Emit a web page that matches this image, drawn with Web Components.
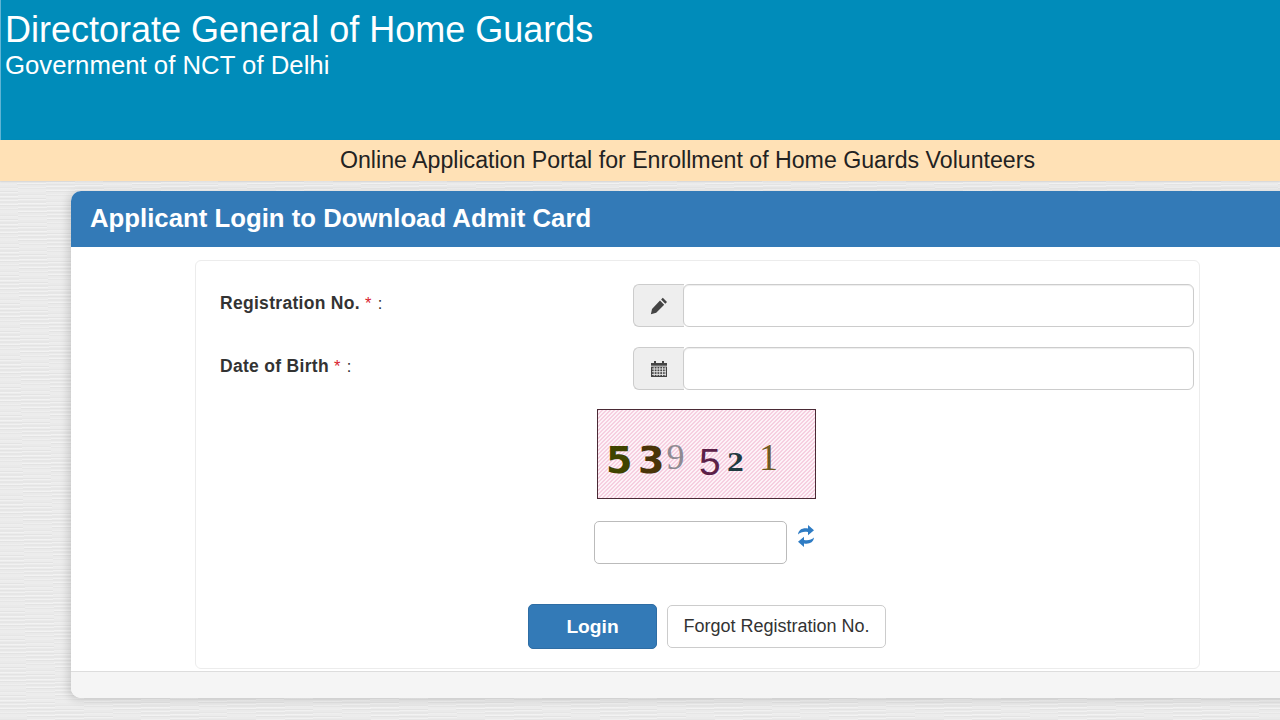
<!DOCTYPE html>
<html lang="en">
<head>
<meta charset="utf-8">
<title>Directorate General of Home Guards</title>
<style>
  html, body { margin: 0; height: 720px; overflow: hidden; }
  body {
    font-family: "Liberation Sans", Arial, sans-serif;
    background-color: #e9e9e9;
    background-image:
      repeating-linear-gradient(178deg, rgba(255,255,255,.35) 0 1px, transparent 1px 4px),
      repeating-linear-gradient(180deg, #ececec 0 2px, #e3e3e3 2px 3px, #eaeaea 3px 5px, #e6e6e6 5px 7px);
  }
</style>
</head>
<body>
<hg-header title="Directorate General of Home Guards" subtitle="Government of NCT of Delhi"></hg-header>
<hg-banner>Online Application Portal for Enrollment of Home Guards Volunteers</hg-banner>
<hg-panel heading="Applicant Login to Download Admit Card">
  <hg-field label="Registration No." icon="pencil"></hg-field>
  <hg-field label="Date of Birth" icon="calendar"></hg-field>
  <hg-captcha></hg-captcha>
  <hg-actions></hg-actions>
</hg-panel>

<script>
// cabecera azul
class HgHeader extends HTMLElement {
  connectedCallback() {
    this.attachShadow({ mode: "open" });
    this.shadowRoot.innerHTML = `
    <style>
      :host { display: block; height: 140px; box-sizing: border-box; background: #008cba; color: #fff; padding: 11px 0 0 5px; border-left: 1px solid #5fb4d4; }
      h1 { margin: 0; font-weight: 400; font-size: 36px; line-height: 38px; margin-left: -1px; }
      p { margin: 0; font-size: 25.75px; line-height: 32px; margin-left: -1px; }
    </style>
    <h1>${this.getAttribute("title")}</h1>
    <p>${this.getAttribute("subtitle")}</p>`;
  }
}

class HgBanner extends HTMLElement {
  connectedCallback() {
    this.attachShadow({ mode: "open" });
    this.shadowRoot.innerHTML = `
    <style>
      :host { display: flex; justify-content: center; align-items: center; height: 41px; background: #ffe1b6; color: #222; font-size: 23.17px; padding-left: 95px; box-sizing: border-box; box-shadow: 0 1px 2px rgba(0,0,0,.08); }
    </style>
    <slot></slot>`;
  }
}

class HgPanel extends HTMLElement {
  connectedCallback() {
    this.attachShadow({ mode: "open" });
    this.shadowRoot.innerHTML = `
    <style>
      :host { display: block; margin: 10px -40px 0 71px; background: #fff; border-radius: 10px; box-shadow: -3px 2px 8px rgba(0,0,0,.14); overflow: hidden; }
      .head { height: 56px; box-sizing: border-box; background: #337ab7; color: #fff; font-weight: 700; font-size: 25.76px; line-height: 54px; padding-left: 19px; }
      .body { height: 424px; box-sizing: border-box; padding: 13px 0 0 124px; }
      .well { width: 1005px; height: 409px; box-sizing: border-box; border: 1px solid #ececec; border-radius: 6px; padding: 23px 5px 0 24px; }
      .foot { height: 27px; box-sizing: border-box; background: #f5f5f5; border-top: 1px solid #ddd; }
    </style>
    <div class="head">${this.getAttribute("heading")}</div>
    <div class="body"><div class="well"><slot></slot></div></div>
    <div class="foot"></div>`;
  }
}

const fieldIcons = {
  pencil: `<svg width="20" height="20" viewBox="0 0 20 20" fill="#444"><path d="M13.8 1.8l4.2 4.2-1.7 1.7-4.2-4.2zM11 4.6l4.2 4.2-8 8-4.4 1.2-.9.2 1.1-5.2z"/></svg>`,
  calendar: `<svg width="18" height="18" viewBox="0 0 18 18"><path fill="#444" d="M1 3h16v14H1z"/><path fill="#444" d="M4 1h2v3H4zM12 1h2v3h-2z"/><path stroke="#eee" stroke-width=".9" fill="none" d="M1 6.2h16M2 9h14M2 11.7h14M2 14.4h14M4.2 7v9M7 7v9M9.8 7v9M12.6 7v9M15.2 7v9"/></svg>`
};

class HgField extends HTMLElement {
  connectedCallback() {
    this.attachShadow({ mode: "open" });
    this.shadowRoot.innerHTML = `
    <style>
      :host { display: grid; grid-template-columns: 413px 561px; height: 43px; margin-bottom: 20px; color: #333; font-size: 17.5px; }
      label { font-weight: 700; letter-spacing: .3px; padding-top: 9px; line-height: 20px; }
      b { color: #d9232e; font-weight: 400; font-size: 16.5px; letter-spacing: 0; }
      i { font-style: normal; font-weight: 400; font-size: 16.5px; letter-spacing: 0; margin-left: 1px; }
      .group { display: flex; }
      .addon { width: 51px; box-sizing: border-box; display: flex; align-items: center; justify-content: center; background: #eee; border: 1px solid #ccc; border-right: 0; border-radius: 6px 0 0 6px; }
      input { flex: 1; min-width: 0; margin-left: -1px; box-sizing: border-box; border: 1px solid #ccc; border-radius: 6px; background: #fff; outline: none; box-shadow: inset 0 1px 1px rgba(0,0,0,.075); }
    </style>
    <label>${this.getAttribute("label")} <b>*</b> <i>:</i></label>
    <div class="group">
      <span class="addon">${fieldIcons[this.getAttribute("icon")]}</span>
      <input type="text">
    </div>`;
  }
}

// captcha: cada digito lleva su fuente, color y desplazamiento
const captchaDigits = [
  { ch: "5", font: "700 37px 'DejaVu Sans'", color: "#3f4400", left: 8, y: 0, sx: 1.03 },
  { ch: "3", font: "700 37px 'DejaVu Sans'", color: "#4a3408", left: 6, y: 0, sx: 1.03 },
  { ch: "9", font: "400 36px 'Liberation Serif'", color: "#8f8a92", left: 3, y: -3, sx: 1 },
  { ch: "5", font: "400 37px 'Liberation Sans'", color: "#5c2148", left: 14, y: 3, sx: 1.05 },
  { ch: "2", font: "700 28px 'Liberation Serif'", color: "#1f3a40", left: 8, y: 2, sx: 1.2 },
  { ch: "1", font: "400 38px 'Liberation Serif'", color: "#6e5a22", left: 18, y: -3, sx: 1 }
];

class HgCaptcha extends HTMLElement {
  connectedCallback() {
    this.attachShadow({ mode: "open" });
    const digits = captchaDigits.map(d =>
      `<span style="font:${d.font};color:${d.color};margin-left:${d.left}px;transform:translateY(${d.y}px) scaleX(${d.sx})">${d.ch}</span>`
    ).join("");
    this.shadowRoot.innerHTML = `
    <style>
      :host { display: flex; flex-direction: column; padding-left: 374px; margin-top: -1px; }
      .image { width: 219px; height: 90px; margin-left: 3px; box-sizing: border-box; border: 1px solid #4a2a35; display: flex; align-items: center; padding-top: 12px;
        background: repeating-linear-gradient(135deg, #f6cfe0 0 1.2px, #fdf2f7 1.2px 2.828px); }
      .image span { display: block; line-height: 1; transform-origin: left center; }
      .row { display: flex; align-items: flex-start; margin-top: 22px; }
      input { width: 193px; height: 43px; box-sizing: border-box; border: 1px solid #bbb; border-radius: 5px; background: #fff; outline: none; }
      svg { margin: 3px 0 0 10px; }
    </style>
    <div class="image">${digits}</div>
    <div class="row">
      <input type="text">
      <svg width="18" height="24" viewBox="0 0 18 24" fill="#2f7cc4">
        <path d="M1 10.5C1.5 5.5 6 3.6 11 4.6V1l6 5.2-6 5V8C7 7.2 3.6 8 1 10.5z"/>
        <path d="M17 13.5c-.5 5-5 6.9-10 5.9V23l-6-5.2 6-5V16c4 .8 7.4 0 10-2.5z"/>
      </svg>
    </div>`;
  }
}

class HgActions extends HTMLElement {
  connectedCallback() {
    this.attachShadow({ mode: "open" });
    this.shadowRoot.innerHTML = `
    <style>
      :host { display: flex; align-items: center; gap: 10px; margin: 40px 0 0 308px; }
      button { font-family: inherit; border-radius: 5px; cursor: pointer; padding: 0; }
      .login { width: 129px; height: 45px; background: #337ab7; border: 1px solid #2e6da4; color: #fff; font-size: 19.2px; font-weight: 700; }
      .forgot { width: 219px; height: 43px; background: #fff; border: 1px solid #ccc; color: #333; font-size: 18px; }
    </style>
    <button class="login">Login</button>
    <button class="forgot">Forgot Registration No.</button>`;
  }
}

customElements.define("hg-header", HgHeader);
customElements.define("hg-banner", HgBanner);
customElements.define("hg-panel", HgPanel);
customElements.define("hg-field", HgField);
customElements.define("hg-captcha", HgCaptcha);
customElements.define("hg-actions", HgActions);
</script>
</body>
</html>
